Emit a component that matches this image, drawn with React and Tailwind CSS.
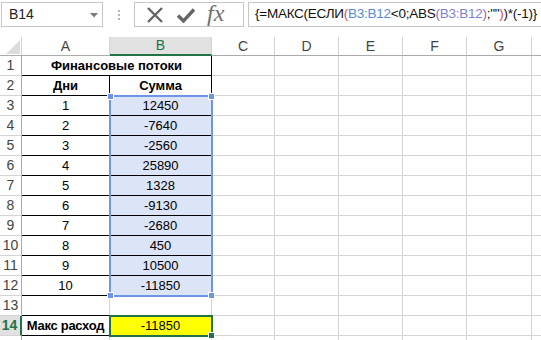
import React from "react";

const font = { fontFamily: "'Liberation Sans', Arial, sans-serif" };

const days = [1, 2, 3, 4, 5, 6, 7, 8, 9, 10];
const sums = [12450, -7640, -2560, 25890, 1328, -9130, -2680, 450, 10500, -11850];

// widths of C..G
const rest = [
  { k: "C", w: "w-[63px]" },
  { k: "D", w: "w-[64px]" },
  { k: "E", w: "w-[64px]" },
  { k: "F", w: "w-[64px]" },
  { k: "G", w: "w-[65px]" },
];

const grid = "h-[20px] shrink-0 border-r border-b border-[#d4d4d4]";

const RowHead = ({ n, active }) =>
  active ? (
    <div className="h-[20px] w-[22px] shrink-0 border-b border-[#d4d4d4] border-r-2 border-r-[#217346] bg-[#e1e1e1] text-[#217346] font-bold text-[14px] flex items-center justify-center pr-[1px]">
      {n}
    </div>
  ) : (
    <div className="h-[20px] w-[22px] shrink-0 border-b border-r border-[#d4d4d4] border-r-[#ababab] text-[#444] text-[14px] flex items-center justify-center">
      {n}
    </div>
  );

const Empties = () => (
  <>
    {rest.map((c) => (
      <div key={c.k} className={`${grid} ${c.w}`} />
    ))}
    <div className="h-[20px] flex-1 border-b border-[#d4d4d4]" />
  </>
);

const Handle = ({ className }) => (
  <div className={`absolute w-[7px] h-[7px] bg-[#6f96e6] border border-white ${className}`} />
);

const FormulaBar = () => (
  <div className="h-[37px] flex items-start pt-[2px] bg-white">
    <div className="ml-[1px] w-[102px] h-[25px] border border-[#c6c6c6] flex items-center pl-[7px] text-[14px] text-[#222] relative">
      B14
      <svg className="absolute left-[88px] top-[10px]" width="8" height="5" viewBox="0 0 8 5">
        <path d="M0 0 L8 0 L4 4.5 Z" fill="#7a7a7a" />
      </svg>
    </div>
    <div className="w-[31px] h-[25px] flex flex-col items-center justify-center gap-[2px]">
      <div className="w-[2px] h-[2px] bg-[#b4b4b4]" />
      <div className="w-[2px] h-[2px] bg-[#b4b4b4]" />
      <div className="w-[2px] h-[2px] bg-[#b4b4b4]" />
    </div>
    <div className="w-[110px] h-[25px] border border-[#c6c6c6] flex items-center">
      <svg className="ml-[11px]" width="18" height="18" viewBox="0 0 18 18">
        <path d="M2 2 L16 16 M16 2 L2 16" stroke="#666" strokeWidth="2.4" />
      </svg>
      <svg className="ml-[13px]" width="18" height="16" viewBox="0 0 18 16">
        <path d="M1 8.5 L6.5 14 L17 2.5" stroke="#666" strokeWidth="3.4" fill="none" />
      </svg>
      <span
        className="ml-[12px] text-[24px] italic text-[#707070] leading-none -mt-[3px]"
        style={{ fontFamily: "'Liberation Serif', 'Times New Roman', serif" }}
      >
        fx
      </span>
    </div>
    <div className="ml-[4px] flex-1 h-[25px] border-t border-b border-l border-[#c6c6c6] flex items-center pl-[6px] text-[13.5px] tracking-[-0.25px] text-[#111] whitespace-nowrap overflow-hidden">
      <span>{"{=МАКС(ЕСЛИ"}</span>
      <span className="text-[#e0474c]">(</span>
      <span className="text-[#5b87dc]">B3:B12</span>
      <span>{"<0;ABS"}</span>
      <span className="text-[#9b5fc0]">(</span>
      <span className="text-[#7d7fd8]">B3:B12</span>
      <span className="text-[#9b5fc0]">)</span>
      <span>{';""'}</span>
      <span className="text-[#e0474c]">)</span>
      <span>{")*(-1)}"}</span>
    </div>
  </div>
);

const App = () => {
  return (
    <div className="w-[541px] h-[340px] overflow-hidden bg-white text-black" style={font}>
      <FormulaBar />

      <div className="relative">
        {/* column headers */}
        <div className="flex h-[19px] border-b border-[#ababab]">
          <div className="w-[22px] shrink-0 border-r border-[#d4d4d4] relative">
            <svg className="absolute left-[6px] top-[3px]" width="14" height="14" viewBox="0 0 14 14">
              <path d="M14 0 L14 14 L0 14 Z" fill="#dcdcdc" />
            </svg>
          </div>
          <div className="w-[88px] shrink-0 border-r border-[#d4d4d4] flex items-center justify-center text-[14px] text-[#444]">
            A
          </div>
          <div className="w-[102px] shrink-0 border-r border-[#d4d4d4] bg-[#e1e1e1] border-b-2 border-b-[#217346] -mb-[1px] flex items-center justify-center text-[14px] text-[#217346]">
            B
          </div>
          {rest.map((c) => (
            <div
              key={c.k}
              className={`${c.w} shrink-0 border-r border-[#d4d4d4] flex items-center justify-center text-[14px] text-[#444]`}
            >
              {c.k}
            </div>
          ))}
          <div className="flex-1" />
        </div>

        {/* row 1 */}
        <div className="flex text-[13px]">
          <RowHead n={1} />
          <div className="h-[20px] w-[190px] shrink-0 border-r border-b border-black font-bold flex items-center justify-center">
            Финансовые потоки
          </div>
          <Empties />
        </div>

        {/* row 2 */}
        <div className="flex text-[13px]">
          <RowHead n={2} />
          <div className="h-[20px] w-[88px] shrink-0 border-r border-b border-black font-bold flex items-center justify-center">
            Дни
          </div>
          <div className="h-[20px] w-[102px] shrink-0 border-r border-b border-black font-bold flex items-center justify-center">
            Сумма
          </div>
          <Empties />
        </div>

        {/* rows 3-12 */}
        {days.map((d, i) => (
          <div key={d} className="flex text-[13px]">
            <RowHead n={i + 3} />
            <div className="h-[20px] w-[88px] shrink-0 border-r border-b border-black flex items-center justify-center">
              {d}
            </div>
            <div className="h-[20px] w-[102px] shrink-0 border-r border-b border-black bg-[#dce4f7] flex items-center justify-center">
              {sums[i]}
            </div>
            <Empties />
          </div>
        ))}

        {/* row 13 */}
        <div className="flex text-[13px]">
          <RowHead n={13} />
          <div className="h-[20px] w-[88px] shrink-0 border-r border-b border-[#d4d4d4] border-b-black" />
          <div className={`${grid} w-[102px]`} />
          <Empties />
        </div>

        {/* row 14 */}
        <div className="flex text-[13px]">
          <RowHead n={14} active />
          <div className="h-[20px] w-[88px] shrink-0 border-r border-b border-black font-bold flex items-center justify-center whitespace-nowrap tracking-[-0.3px]">
            Макс расход
          </div>
          <div className="h-[20px] w-[102px] shrink-0 border-r border-b border-black bg-[#ffff00] flex items-center justify-center">
            -11850
          </div>
          <Empties />
        </div>

        {/* row 15, only its top edge is in view */}
        <div className="flex">
          <RowHead n="" />
          <div className={`${grid} w-[88px]`} />
          <div className={`${grid} w-[102px]`} />
          <Empties />
        </div>

        {/* B3:B12 reference highlight */}
        <div className="absolute left-[109px] top-[58px] w-[104px] h-[202px] border-2 border-[#6f96e6] pointer-events-none">
          <Handle className="-left-[4px] -top-[4px]" />
          <Handle className="-right-[4px] -top-[4px]" />
          <Handle className="-left-[4px] -bottom-[4px]" />
          <Handle className="-right-[4px] -bottom-[4px]" />
        </div>

        {/* active cell B14 */}
        <div className="absolute left-[109px] top-[278px] w-[104px] h-[22px] border-2 border-[#217346] pointer-events-none">
          <div className="absolute -right-[4px] -bottom-[4px] w-[7px] h-[7px] bg-[#217346] border border-white" />
        </div>
      </div>
    </div>
  );
};

export default App;
